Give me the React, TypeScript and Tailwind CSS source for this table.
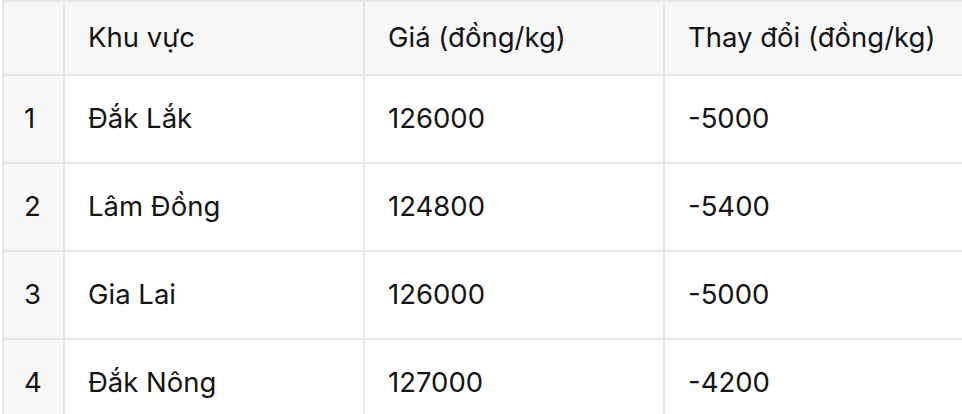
const rows = [
  { id: 1, region: "Đắk Lắk", price: "126000", change: "-5000" },
  { id: 2, region: "Lâm Đồng", price: "124800", change: "-5400" },
  { id: 3, region: "Gia Lai", price: "126000", change: "-5000" },
  { id: 4, region: "Đắk Nông", price: "127000", change: "-4200" },
];

export default function App() {
  return (
    <div className="h-[414px] w-[962px] overflow-hidden bg-white pl-[2px] font-['Inter',sans-serif] text-[27.5px] text-[#141414]">
      <table className="w-[962px] table-fixed border-collapse">
        <colgroup>
          <col className="w-[61px]" />
          <col className="w-[300px]" />
          <col className="w-[300px]" />
          <col className="w-[301px]" />
        </colgroup>
        <thead>
          <tr className="h-[74px] bg-[#f7f7f7]">
            <th className="border-2 border-[#e6e6e6]" />
            <th className="border-2 border-[#e6e6e6] px-[23px] text-left font-normal">Khu vực</th>
            <th className="border-2 border-[#e6e6e6] px-[23px] text-left font-normal">Giá (đồng/kg)</th>
            <th className="border-2 border-[#e6e6e6] px-[23px] text-left font-normal whitespace-nowrap">Thay đổi (đồng/kg)</th>
          </tr>
        </thead>
        <tbody>
          {rows.map((r) => (
            <tr key={r.id} className="h-[88px]">
              <td className="border-2 border-[#e6e6e6] bg-[#f7f7f7] px-[20px]">{r.id}</td>
              <td className="border-2 border-[#e6e6e6] px-[23px]">{r.region}</td>
              <td className="border-2 border-[#e6e6e6] px-[23px]">{r.price}</td>
              <td className="border-2 border-[#e6e6e6] px-[23px]">{r.change}</td>
            </tr>
          ))}
        </tbody>
      </table>
    </div>
  );
}
